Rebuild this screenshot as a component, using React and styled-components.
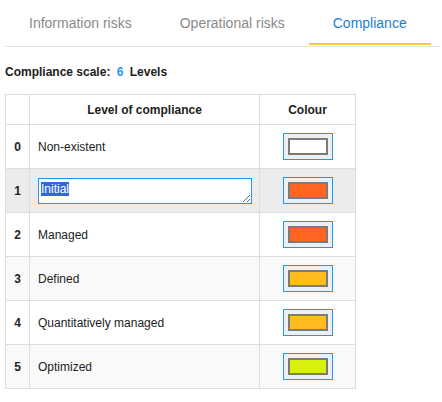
import React, { useEffect, useRef } from 'react'
import styled, { createGlobalStyle } from 'styled-components'

const levels = [
  { name: 'Non-existent', colour: '#ffffff' },
  { name: 'Initial', colour: '#ff6421' },
  { name: 'Managed', colour: '#ff6421' },
  { name: 'Defined', colour: '#ffbc1f' },
  { name: 'Quantitatively managed', colour: '#ffbc1f' },
  { name: 'Optimized', colour: '#d8f00b' },
];

const tabs = ['Information risks', 'Operational risks', 'Compliance'];

const App = () => {
  const editRef = useRef(null);

  useEffect(() => {
    if (editRef.current) {
      editRef.current.focus();
      editRef.current.select();
    }
  }, []);

  return (
    <>
      <GlobalStyle />
      <Page>
        <TabBar>
          {tabs.map((t, i) => (
            <Tab key={t} $active={i === 2}>{t}</Tab>
          ))}
        </TabBar>
        <Scale>
          Compliance scale: <ScaleValue>6</ScaleValue> Levels
        </Scale>
        <Table>
          <colgroup>
            <col style={{ width: 24 }} />
            <col style={{ width: 230 }} />
            <col style={{ width: 96 }} />
          </colgroup>
          <thead>
            <tr>
              <HeadCell />
              <HeadCell>Level of compliance</HeadCell>
              <HeadCell>Colour</HeadCell>
            </tr>
          </thead>
          <tbody>
            {levels.map((lvl, i) => (
              <Row key={i} $striped={i % 2 === 1} $editing={i === 1}>
                <NumCell>{i}</NumCell>
                <NameCell>
                  {i === 1 ? (
                    <EditBox ref={editRef} defaultValue={lvl.name} spellCheck={false} />
                  ) : (
                    lvl.name
                  )}
                </NameCell>
                <ColourCell>
                  <Swatch type="button">
                    <SwatchFill style={{ background: lvl.colour }} />
                  </Swatch>
                </ColourCell>
              </Row>
            ))}
          </tbody>
        </Table>
      </Page>
    </>
  )
}

export default App

const GlobalStyle = createGlobalStyle`
  html, body {
    margin: 0;
    background: #fff;
  }
  body {
    font-family: "Liberation Sans", Arial, sans-serif;
    color: #222;
  }
`;

const Page = styled.div`
  padding: 0 1px 0 5px;
`;

const TabBar = styled.div`
  display: flex;
  height: 46px;
  border-bottom: 1px solid #e3e3e3;
`;

const Tab = styled.div`
  display: flex;
  align-items: center;
  padding: 2px 24px 0;
  height: 45px;
  box-sizing: border-box;
  font-size: 14px;
  color: ${p => (p.$active ? '#1a7fd4' : '#8a8a8a')};
  border-bottom: 2px solid ${p => (p.$active ? '#f7cb3d' : 'transparent')};
  cursor: pointer;
`;

const Scale = styled.div`
  margin-top: 18px;
  font-size: 12px;
  font-weight: bold;
  color: #222;
  line-height: 14px;
`;

const ScaleValue = styled.span`
  color: #2196f3;
  margin: 0 3px;
`;

const Table = styled.table`
  margin-top: 15px;
  width: 350px;
  border-collapse: collapse;
  table-layout: fixed;
  font-size: 12px;
`;

const HeadCell = styled.th`
  height: 29px;
  border: 1px solid #dddddd;
  font-weight: bold;
  text-align: center;
  padding: 0;
`;

const Row = styled.tr`
  height: 44px;
  background: ${p => (p.$editing ? '#ececec' : p.$striped ? '#f9f9f9' : '#fff')};
`;

const NumCell = styled.td`
  border: 1px solid #dddddd;
  text-align: center;
  font-weight: bold;
  padding: 0;
`;

const NameCell = styled.td`
  border: 1px solid #dddddd;
  padding: 0 7px 0 8px;
  vertical-align: middle;
`;

const ColourCell = styled.td`
  border: 1px solid #dddddd;
  text-align: center;
  padding: 0 0 0 1px;
`;

const EditBox = styled.textarea`
  display: block;
  width: 214px;
  height: 26px;
  box-sizing: border-box;
  border: 1px solid #2196f3;
  outline: none;
  padding: 3px 2px 2px;
  margin: 0;
  font-family: "Liberation Sans", Arial, sans-serif;
  font-size: 12px;
  line-height: 14px;
  color: #222;
  background: #fff;
  resize: both;

  &::selection {
    background: #3367d6;
    color: #fff;
  }
`;

const Swatch = styled.button`
  display: inline-flex;
  align-items: center;
  justify-content: center;
  width: 50px;
  height: 27px;
  box-sizing: border-box;
  padding: 0;
  margin: 0;
  border: 1px solid #2196f3;
  background: #efefef;
  cursor: pointer;
  vertical-align: middle;
`;

const SwatchFill = styled.span`
  display: block;
  width: 40px;
  height: 17px;
  box-sizing: border-box;
  border: 2px solid #7b7b7b;
`;
